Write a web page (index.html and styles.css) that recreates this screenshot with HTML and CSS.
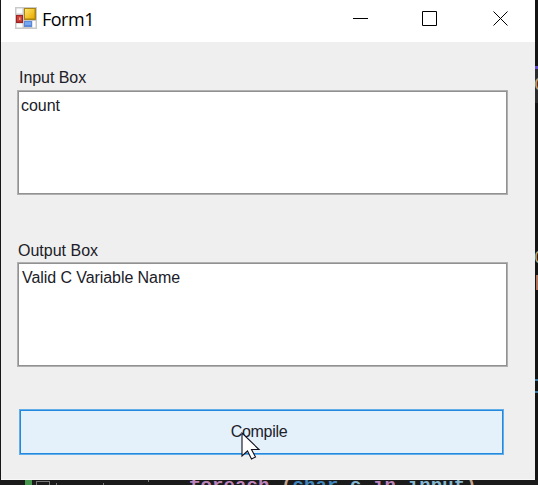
FILE: index.html
```
<!DOCTYPE html>
<html lang="en">
<head>
<meta charset="utf-8">
<title>Form1</title>
<link rel="stylesheet" href="styles.css">
</head>
<body>
<main class="window">
  <header class="titlebar">
    <svg class="app-icon" width="22" height="22" viewBox="0 0 22 22">
      <defs>
        <linearGradient id="gold" x2="1" y2="1"><stop stop-color="#ffe56a"/><stop offset="1" stop-color="#e9a900"/></linearGradient>
      </defs>
      <path fill="#c9c9c9" d="M0 0h22v22H0z"/>
      <path fill="#fff" d="M1.500 1.500h6v5h-6zM1.500 16.500h6v4h-6zM17.500 14H20.500v6.500h-3z"/>
      <path fill="#a98517" d="M9 1h12v12H9z"/>
      <path fill="url(#gold)" d="M10 2h9.500v9.500H10z"/>
      <path fill="#9e2424" d="M1 8h7v8H1z"/>
      <path fill="#cf4238" d="M2 9h5v5.500H2z"/>
      <path fill="#f3a49a" d="M4 10.500h1.500V13H4z"/>
      <path fill="#5b88d8" d="M9 14h8v6H9z"/>
      <path fill="#76a7f1" d="M10 15h6v3h-6z"/>
    </svg>
    <h1 class="title">Form1</h1>
    <svg class="controls" width="156" height="15" viewBox="0 0 156 15" fill="none" stroke="#000">
      <path d="M0 7.500h15M69.500.5h14v14h-14z"/>
      <path d="M140.500.5l14 14M154.500.5l-14 14"/>
    </svg>
  </header>
  <section class="form">
    <label class="label label-input">Input Box</label>
    <div class="textbox">count</div>
    <label class="label label-output">Output Box</label>
    <div class="textbox result">Valid C Variable Name</div>
    <button class="compile">Compile</button>
  </section>
</main>
<aside class="edge">
  <i class="edge-line"></i><i class="edge-panel"></i>
  <span class="edge-char paren">C</span>
  <span class="edge-char bracket">0</span>
  <i class="edge-orange"></i>
  <i class="edge-blue"></i>
</aside>
<footer class="editor">
  <i class="change"></i><i class="fold"></i><i class="guide g1"></i><i class="guide g2"></i><i class="guide g3"></i>
  <code class="code"><span class="keyword">foreach</span> <span class="plain">(</span><span class="type">char</span> <span class="name">c</span> <span class="keyword">in</span> <span class="name">input</span><span class="plain">)</span></code>
</footer>
<svg class="cursor" width="20" height="30" viewBox="0 0 20 30"><path d="M1 1v23l5.500-5 4 8 4-2-4-7.500H18z" fill="#fff" stroke="#101020" stroke-width="1.100"/></svg>
</body>
</html>
```
FILE: styles.css
```
* { box-sizing: border-box; }
body {
  margin: 0;
  width: 538px;
  height: 485px;
  overflow: hidden;
  position: relative;
  display: grid;
  grid-template: 480px 5px / 535px 3px;
  background: #171719;
  font: 16px "Liberation Sans", sans-serif;
}
.window { margin-left: 1px; background: #efefef; border-bottom: 1px solid #f8f8f8; }
.titlebar { display: flex; height: 42px; background: #fff; }
.app-icon { margin: 7px 0 0 14px; }
.title {
  margin: 7px 0 0 5px;
  width: 60px;
  font: 18px/25px "Open Sans", sans-serif;
  letter-spacing: -.5px;
  color: #000;
}
.controls { margin: 11px 0 0 251px; }
.form { display: flex; flex-direction: column; padding: 26px 27px 0 16px; }
.label { height: 22px; line-height: 19px; color: #202028; letter-spacing: -.05px; }
.label-input { padding-left: 2px; }
.label-output { margin-top: 46px; height: 21px; padding-left: 1px; letter-spacing: 0; }
.textbox {
  width: 491px;
  height: 105px;
  padding: 5px 3px;
  border: 1px solid #b0b0b0;
  box-shadow: inset 0 0 0 1px #919191;
  background: #fff;
  line-height: 20px;
  letter-spacing: -.05px;
  color: #202028;
}
.result { letter-spacing: -.07px; padding-left: 4px; }
.compile {
  width: 485px;
  height: 46px;
  margin: 42px 0 0 2px;
  padding: 0 5px 0 0;
  border: 1px solid #62aee9;
  box-shadow: inset 0 0 0 1px #2489de;
  background: #e4f1fb;
  color: #202028;
  font: 16px "Liberation Sans", sans-serif;
  letter-spacing: -.3px;
}
.edge { position: relative; overflow: hidden; background: #141415; }
.edge i, .edge-char { position: absolute; }
.edge-line { top: 66px; width: 3px; height: 3px; background: #6049c8; }
.edge-panel { top: 69px; width: 3px; height: 34px; background: #2b2b2d; }
.edge-char { left: -1px; font: 18px/18px "Liberation Mono", monospace; }
.paren { top: 76px; color: #c29b70; }
.bracket { top: 249px; color: #b1a67c; }
.edge-orange { top: 275px; width: 2px; height: 15px; margin-left: 1px; background: #ad7259; }
.edge-blue { top: 379px; width: 3px; height: 14px; border-top: 2px solid #3977a5; border-bottom: 2px solid #3977a5; }
.editor { grid-column: 1 / 3; display: flex; overflow: hidden; position: relative; background: #1b1b1c; }
.editor i { flex: none; }
.change { margin-left: 25px; width: 7px; background: #43964b; }
.fold { margin: 1px 0 0 4px; width: 14px; height: 10px; border: 1px solid #777; }
.guide { width: 1px; height: 2px; margin-top: 3px; background: #777; }
.g1 { margin-left: 6px; }
.g2 { margin-left: 46px; }
.g3 { margin: 0 0 0 44px; }
.code {
  flex: none;
  margin: -4px 0 0 40px;
  font: bold 19px/20px "Liberation Mono", monospace;
  letter-spacing: .1px;
}
.keyword { color: #bd83ba; }
.type { color: #4185bd; }
.name { color: #84b6cf; }
.plain { color: #c5a58b; }
.cursor { position: absolute; left: 241px; top: 432px; }
```
